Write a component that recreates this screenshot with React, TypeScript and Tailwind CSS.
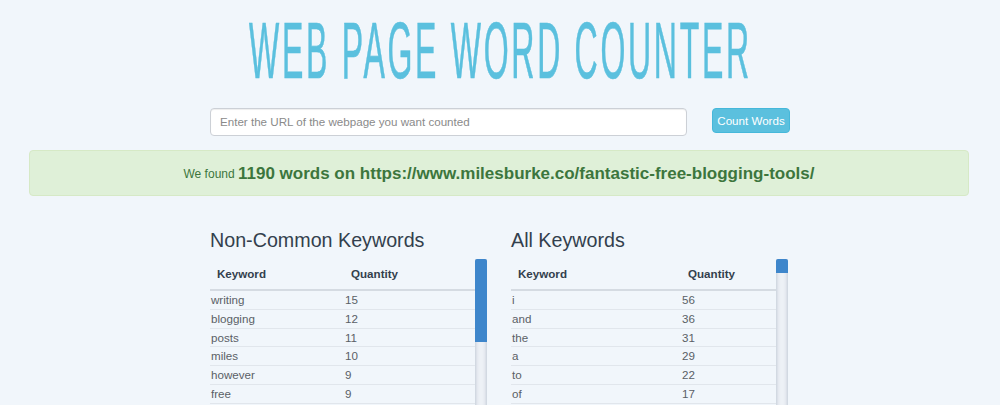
import React from 'react';

const nonCommon = [
  ['writing', '15'],
  ['blogging', '12'],
  ['posts', '11'],
  ['miles', '10'],
  ['however', '9'],
  ['free', '9'],
];

const allWords = [
  ['i', '56'],
  ['and', '36'],
  ['the', '31'],
  ['a', '29'],
  ['to', '22'],
  ['of', '17'],
];

interface KeywordTableProps {
  title: string;
  rows: string[][];
  colClass: string;
  thumbClass: string;
}

const KeywordTable: React.FC<KeywordTableProps> = ({ title, rows, colClass, thumbClass }) => (
  <div className="w-[277px]">
    <h3 className="h-[38px] text-[19.7px] leading-[22px] pt-[8px] text-[#333f4d] whitespace-nowrap">{title}</h3>
    <div className="flex">
      <div className="w-[265px]">
        <table className="w-full table-fixed text-[11.6px] text-[#5a5f66]">
          <thead>
            <tr className="border-b-2 border-[#d5dbe2]">
              <th className={`${colClass} h-[31px] pl-[7px] text-left font-bold text-[#333f4d]`}>Keyword</th>
              <th className="pl-[7px] text-left font-bold text-[#333f4d]">Quantity</th>
            </tr>
          </thead>
          <tbody>
            {rows.map(([word, count]) => (
              <tr key={word} className="h-[18.8px] border-b border-[#e1e6ec]">
                <td className="p-0 pl-[1px] leading-[17.8px]">{word}</td>
                <td className="p-0 pl-[1px] leading-[17.8px]">{count}</td>
              </tr>
            ))}
          </tbody>
        </table>
      </div>
      <div className="w-[12px] h-[160px] rounded-t-[2px] bg-[#edf1f6] shadow-[inset_0_0_4px_rgba(90,110,140,0.45)]">
        <div className={`${thumbClass} rounded-t-[2px] bg-[#3e86cb]`} />
      </div>
    </div>
  </div>
);

export default function App() {
  return (
    <div className="h-[405px] overflow-hidden bg-[#f1f6fb] font-['Liberation_Sans',Arial,sans-serif]">
      <div className="h-[108px] flex justify-center overflow-hidden">
        <h1 className="mt-[7px] text-[80px] leading-[88px] tracking-[6.8px] font-normal text-[#5bc0de] whitespace-nowrap scale-x-[0.4] [-webkit-text-stroke:0.7px_#5bc0de]">
          WEB PAGE WORD COUNTER
        </h1>
      </div>

      <div className="h-[42px] ml-[210px] flex items-start">
        <input
          className="w-[477px] h-[28px] px-[9px] pb-[2px] rounded-[4px] bg-white border border-[#ccd0d6] text-[11.6px] shadow-[inset_0_1px_1px_rgba(0,0,0,0.07)] placeholder:text-[#8a8a8a]"
          placeholder="Enter the URL of the webpage you want counted"
          readOnly
        />
        <button className="ml-[25px] w-[78px] h-[25px] rounded-[4px] bg-[#5bc0de] border border-[#46b8da] text-white text-[11.6px]">
          Count Words
        </button>
      </div>

      <div className="mx-[29px] w-[940px] h-[46px] flex items-center justify-center rounded-[4px] bg-[#dff0d8] border border-[#d6e9c6] text-[12px] text-[#3c763d]">
        <span className="pt-[2px]">We found&nbsp;</span>
        <strong className="pt-[1px] text-[17px] font-bold">1190 words on https://www.milesburke.co/fantastic-free-blogging-tools/</strong>
      </div>

      <div className="mt-[25px] ml-[210px] flex gap-[24px]">
        <KeywordTable title="Non-Common Keywords" rows={nonCommon} colClass="w-[134px]" thumbClass="h-[83px]" />
        <KeywordTable title="All Keywords" rows={allWords} colClass="w-[170px]" thumbClass="h-[14px]" />
      </div>
    </div>
  );
}
